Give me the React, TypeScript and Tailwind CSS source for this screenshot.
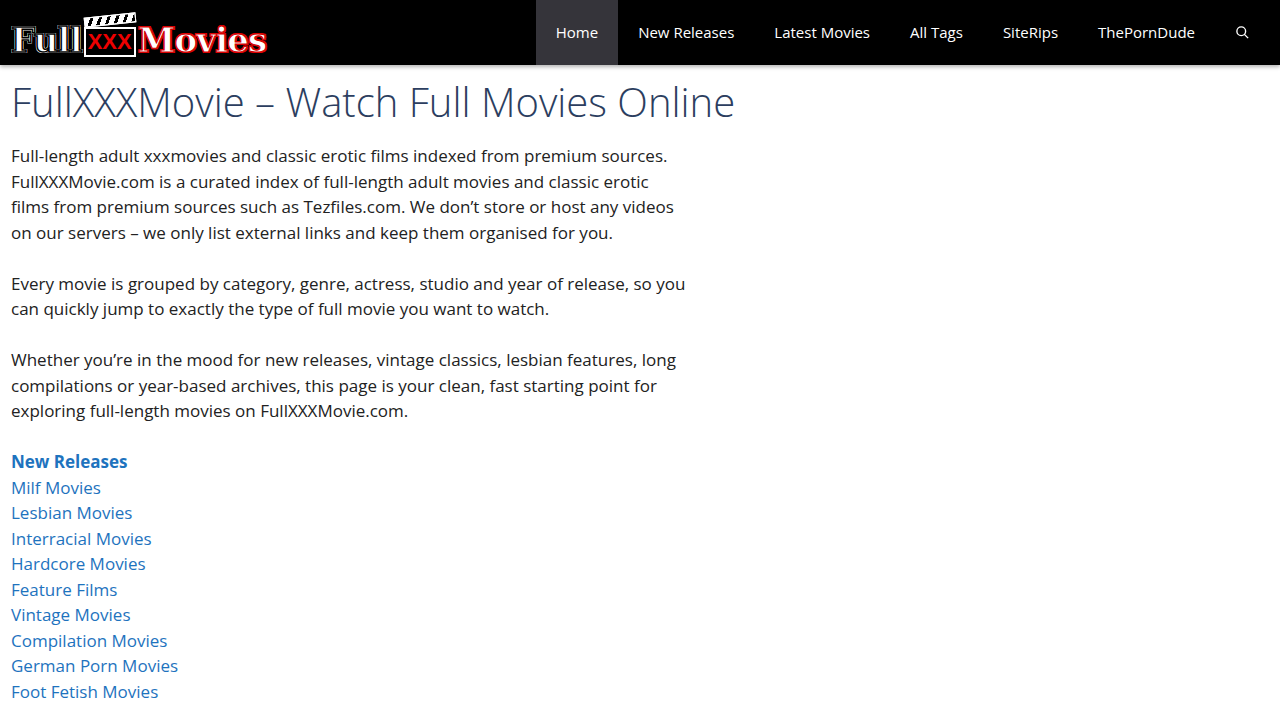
export default function App() {
  const nav = ["Home", "New Releases", "Latest Movies", "All Tags", "SiteRips", "ThePornDude"];
  const links = ["Milf Movies","Lesbian Movies","Interracial Movies","Hardcore Movies","Feature Films","Vintage Movies","Compilation Movies","German Porn Movies","Foot Fetish Movies"];
  const f = { fontFamily: '"Open Sans", sans-serif' };
  return (
    <div className="min-h-[720px] bg-white" style={f}>
      <header className="h-[65px] bg-black flex items-center justify-between pl-[11px] shadow-[0_2px_4px_rgba(0,0,0,0.3)]">
        <div className="flex items-end h-[46px] mt-[2px]">
          <span className="text-[34px] font-black text-white leading-none tracking-tight" style={{ fontFamily: '"DejaVu Serif", serif', WebkitTextStroke: "1.5px #000", textShadow: "0 0 0 #fff, 1px 1px 0 #fff, -1px -1px 0 #fff, 1px -1px 0 #fff, -1px 1px 0 #fff" }}>Full</span>
          <div className="flex flex-col items-center mx-[2px]">
            <div className="w-[52px] h-[10px] bg-white mb-[2px] -rotate-6 bg-[repeating-linear-gradient(115deg,#fff_0_5px,#000_5px_8px)] border border-white"></div>
            <div className="w-[52px] h-[30px] bg-black border-2 border-white flex items-center justify-center text-[#e00] font-bold text-[22px] leading-none" style={{ fontFamily: '"Liberation Sans", sans-serif' }}>XXX</div>
          </div>
          <span className="text-[34px] font-black text-white leading-none tracking-tight" style={{ fontFamily: '"DejaVu Serif", serif', WebkitTextStroke: "1px #c00", textShadow: "1px 1px 0 #e00, -1px -1px 0 #e00, 1px -1px 0 #e00, -1px 1px 0 #e00" }}>Movies</span>
        </div>
        <nav className="flex h-full items-stretch text-[15px] text-white">
          {nav.map((n, i) => (
            <a key={n} className={`flex items-center px-5 ${i === 0 ? "bg-[#35343a]" : ""}`}>{n}</a>
          ))}
          <span className="flex items-center px-5 pr-[30px]">
            <svg width="15" height="15" viewBox="0 0 24 24" fill="none" stroke="white" strokeWidth="2.2"><circle cx="10" cy="10" r="7"/><path d="M15 15l6 6"/></svg>
          </span>
        </nav>
      </header>
      <main className="px-[11px] pt-[13px]">
        <h1 className="text-[40px] font-light text-[#2c3e60] leading-[1.2] mb-[17px]">FullXXXMovie – Watch Full Movies Online</h1>
        <div className="w-[680px] text-[17px] leading-[25.5px] text-[#222]">
          <p>Full-length adult xxxmovies and classic erotic films indexed from premium sources. FullXXXMovie.com is a curated index of full-length adult movies and classic erotic films from premium sources such as Tezfiles.com. We don’t store or host any videos on our servers – we only list external links and keep them organised for you.</p>
          <p className="mt-[25.5px]">Every movie is grouped by category, genre, actress, studio and year of release, so you can quickly jump to exactly the type of full movie you want to watch.</p>
          <p className="mt-[25.5px]">Whether you’re in the mood for new releases, vintage classics, lesbian features, long compilations or year-based archives, this page is your clean, fast starting point for exploring full-length movies on FullXXXMovie.com.</p>
          <div className="mt-[25.5px] flex flex-col text-[#1e73be]">
            <a className="font-bold">New Releases</a>
            {links.map(l => <a key={l}>{l}</a>)}
          </div>
        </div>
      </main>
    </div>
  );
}
